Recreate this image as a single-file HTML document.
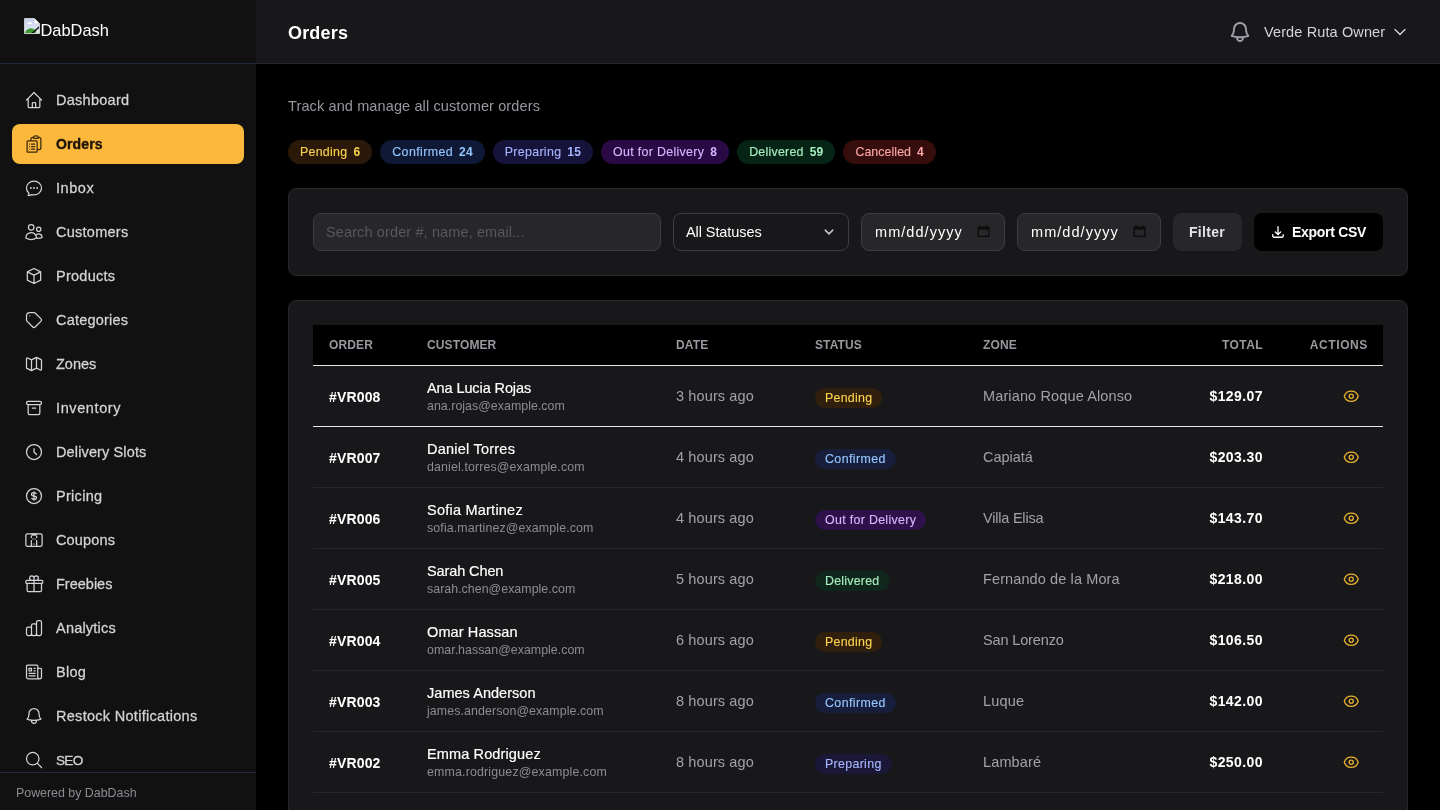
<!DOCTYPE html>
<html lang="en">
<head>
<meta charset="utf-8">
<title>Orders - DabDash</title>
<style>
*{box-sizing:border-box}
html,body{margin:0;padding:0}
html{will-change:transform}
body{width:1440px;height:810px;overflow:hidden;background:#000;color:#fff;font-family:"Liberation Sans",sans-serif;font-size:14px;position:relative}
svg{display:block}
.ico{fill:none;stroke:currentColor;stroke-width:1.5;stroke-linecap:round;stroke-linejoin:round}
/* sidebar */
aside{position:absolute;left:0;top:0;width:256px;height:810px;background:#111111;overflow:hidden}
.brand{height:64px;border-bottom:1px solid #1f2937;position:relative}
.brand svg{position:absolute;left:24px;top:18px}
.brand span{position:absolute;left:40.5px;top:19px;font-size:16px;line-height:22px;color:#fff}
nav{position:absolute;left:0;top:64px;width:256px;padding:16px 12px}
nav a{display:flex;align-items:center;height:40px;margin-bottom:4px;padding:0 12px;border-radius:8px;color:#d4d4d8;text-decoration:none;font-size:14px;font-weight:500}
nav a svg{width:20px;height:20px;margin-right:12px;flex:none}
nav a.on{background:#fcb73d;color:#1c1406;font-weight:600}
nav a.on svg{color:#3a2a0c}
.foot{position:absolute;left:0;top:772px;width:256px;height:38px;background:#111111;border-top:1px solid #1f2937;padding:12px 16px 0;font-size:12px;line-height:16px;color:#8a8a93}
/* header */
header{position:absolute;left:256px;top:0;width:1184px;height:64px;background:#18181b;border-bottom:1px solid #27272a}
header h1{position:absolute;left:32px;top:19px;margin:0;font-size:18px;line-height:28px;font-weight:600;color:#fff}
.bell{position:absolute;left:972px;top:20px;width:24px;height:24px;color:#a1a1ad;stroke-width:1.9}
.user{position:absolute;left:1008px;top:22px;font-size:14px;line-height:20px;color:#d4d4d8}
.chev{position:absolute;left:1136px;top:24px;width:16px;height:16px;color:#d4d4d8;stroke-width:2}
/* main */
.sub{position:absolute;left:288px;top:96px;font-size:14px;line-height:20px;color:#97979f}
.pills{position:absolute;left:288px;top:140px;display:flex}
.pill{height:24px;border-radius:12px;padding:4px 12px;font-size:12px;line-height:16px;margin-right:8px;white-space:nowrap;font-weight:500}
.pill b{margin-left:6px;font-weight:600}
.card{position:absolute;left:288px;width:1120px;background:#18181b;border:1px solid #27272a;border-radius:8px}
.filters{top:188px;height:88px}
.fld{position:absolute;top:24px;height:38px;border:1px solid #3c3c42;border-radius:8px;background:#27272a;font-size:14px;line-height:20px;padding:8px 12px;color:#fff;white-space:nowrap}
.btn{position:absolute;top:24px;height:38px;border-radius:8px;font-size:14px;line-height:20px;font-weight:600;padding:9px 16px;white-space:nowrap}
.tablecard{top:300px;height:600px}
table{position:absolute;left:24px;top:24px;width:1070px;border-collapse:collapse;table-layout:fixed}
th{background:#000;height:40px;padding:0 16px;text-align:left;font-size:12px;line-height:16px;font-weight:600;letter-spacing:.05em;color:#98989f;text-transform:uppercase;border-bottom:1px solid #e5e7eb}
td{height:61px;padding:0 16px;border-bottom:1px solid #27272a;font-size:14px;line-height:20px;color:#a1a1aa;vertical-align:middle;white-space:nowrap}
tr.first td{border-bottom:1px solid #e5e7eb}
td.id,td.tot{color:#fff;font-weight:600}
.r{text-align:right}
.nm{color:#fff;line-height:20px;display:block;font-weight:500}
.em{font-size:12px;line-height:16px;color:#8b8b94;display:block}
.badge{display:inline-block;height:20px;border-radius:10px;padding:2px 10px;font-size:12px;line-height:16px;position:relative;top:2px;font-weight:500}
.eye{display:inline-block;width:16.5px;height:16.5px;color:#e8b12c;vertical-align:middle;margin-right:7.75px;stroke-width:1.9;position:relative;top:0}
.pending{background:#2a1908;color:#fcd34d}
.confirmed{background:#0f1936;color:#93c5fd}
.preparing{background:#16133a;color:#a5b4fc}
.out{background:#290a44;color:#d8b4fe}
.delivered{background:#062416;color:#a6edbf}
.cancelled{background:#340d0c;color:#fca5a5}
.badge.pending{background:#2f1f0c}.badge.confirmed{background:#161e3c}.badge.preparing{background:#1b1837}.badge.out{background:#2d1148}.badge.delivered{background:#0e261b}.badge.cancelled{background:#381413}

/* metric tuning: Liberation Sans sized/spaced to the reference text extents */
.brand span{font-size:16.4px}
nav a span{font-size:14.5px;letter-spacing:.28px;-webkit-text-stroke:.26px currentColor}
nav a.on span{font-size:14px;letter-spacing:.14px;-webkit-text-stroke:.4px currentColor}
.foot{font-size:12.4px}
.user,.sub,.fld,td{font-size:14.5px;letter-spacing:.12px}
.em{font-size:12.4px;letter-spacing:.09px}
.pill,.badge{font-size:12.4px;letter-spacing:.28px;-webkit-text-stroke:.14px currentColor}
.pending{letter-spacing:0.27px}.confirmed{letter-spacing:0.4px}.preparing{letter-spacing:0.32px}.out{letter-spacing:0.32px}.delivered{letter-spacing:0.24px}.cancelled{letter-spacing:0.06px}
.pill b{font-size:12px;letter-spacing:.19px;-webkit-text-stroke:0}
.nm{font-size:14.5px;letter-spacing:.1px;-webkit-text-stroke:.18px currentColor}
td.id,td.tot,.btn{font-size:14px}
td.id{letter-spacing:.16px;padding-top:2px}
td.tot{letter-spacing:.42px;padding-right:15px}
th{font-size:12px;letter-spacing:.12px}
header h1{letter-spacing:.18px}
.date{letter-spacing:1.05px;padding-left:13px}
.btn.exp{letter-spacing:-.3px}
</style>
</head>
<body>
<aside>
  <div class="brand">
    <svg width="16.500" height="16.500" viewBox="0 0 17 17"><defs><linearGradient id="sky" x1="0" y1="0" x2="0" y2="1"><stop offset="0" stop-color="#c3cdeb"/><stop offset="1" stop-color="#e9eefa"/></linearGradient><clipPath id="pg"><path d="M.5.500h10l5.500 5.500v10h-15.500z"/></clipPath></defs><path d="M.5.500h10l5.500 5.500v10h-15.500z" fill="url(#sky)"/><g clip-path="url(#pg)"><circle cx="7.200" cy="17" r="6.400" fill="#3d9a2e"/><path d="M9.500 17l7-6.500v6.500z" fill="#e4eee6" opacity=".75"/><path d="M7.300 16.800l9.500-8.600" stroke="#111" stroke-width="1.500"/></g><path d="M.5.500h10l5.500 5.500v10h-15.500z" fill="none" stroke="#d9d9de" stroke-width=".9"/><path d="M10.500.500v5.500h5.500z" fill="#fff" stroke="#cfcfd6" stroke-width=".7"/><path d="M3.200 6.200c-.3-1 .6-1.600 1.300-1.300.3-1.300 2.300-1.300 2.700 0 .9-.2 1.500.6 1.200 1.300z" fill="#fff"/></svg>
    <span>DabDash</span>
  </div>
  <nav id="nav">
    <a><svg class="ico" viewBox="0 0 24 24"><path d="M3 12l2-2m0 0l7-7 7 7M5 10v10a1 1 0 001 1h3m10-11l2 2m-2-2v10a1 1 0 01-1 1h-3m-6 0a1 1 0 001-1v-4a1 1 0 011-1h2a1 1 0 011 1v4a1 1 0 001 1m-6 0h6"/></svg><span style="letter-spacing:0.27px">Dashboard</span></a>
    <a class="on"><svg class="ico" viewBox="0 0 24 24"><path d="M9 12h3.750M9 15h3.750M9 18h3.750m3 .750H18a2.250 2.250 0 002.250-2.250V6.108c0-1.135-.845-2.098-1.976-2.192a48.424 48.424 0 00-1.123-.080m-5.801 0c-.065.210-.1.433-.1.664 0 .414.336.750.750.750h4.500a.750.750 0 00.750-.750 2.250 2.250 0 00-.1-.664m-5.800 0A2.251 2.251 0 0113.500 2.250H15c1.012 0 1.867.668 2.150 1.586m-5.800 0c-.376.023-.750.050-1.124.080C9.095 4.010 8.250 4.973 8.250 6.108V8.250m0 0H4.875c-.621 0-1.125.504-1.125 1.125v11.250c0 .621.504 1.125 1.125 1.125h9.750c.621 0 1.125-.504 1.125-1.125V9.375c0-.621-.504-1.125-1.125-1.125H8.250zM6.750 12h.008v.008H6.750V12zm0 3h.008v.008H6.750V15zm0 3h.008v.008H6.750V18z"/></svg><span style="letter-spacing:0.14px">Orders</span></a>
    <a><svg class="ico" viewBox="0 0 24 24"><path d="M8.625 12a.375.375 0 11-.75 0 .375.375 0 01.75 0zm0 0H8.25m4.125 0a.375.375 0 11-.75 0 .375.375 0 01.75 0zm0 0H12m4.125 0a.375.375 0 11-.75 0 .375.375 0 01.75 0zm0 0h-.375M21 12c0 4.556-4.03 8.25-9 8.25a9.764 9.764 0 01-2.555-.337A5.972 5.972 0 015.41 20.97a5.969 5.969 0 01-.474-.065 4.48 4.48 0 00.978-2.025c.09-.457-.133-.901-.467-1.226C3.93 16.178 3 14.189 3 12c0-4.556 4.03-8.25 9-8.25s9 3.694 9 8.25z"/></svg><span style="letter-spacing:0.56px">Inbox</span></a>
    <a><svg class="ico" viewBox="0 0 24 24"><path d="M15 19.128a9.38 9.38 0 002.625.372 9.337 9.337 0 004.121-.952 4.125 4.125 0 00-7.533-2.493M15 19.128v-.003c0-1.113-.285-2.16-.786-3.07M15 19.128v.106A12.318 12.318 0 018.624 21c-2.331 0-4.512-.645-6.374-1.766l-.001-.109a6.375 6.375 0 0111.964-3.07M12 6.375a3.375 3.375 0 11-6.75 0 3.375 3.375 0 016.75 0zm8.25 2.25a2.625 2.625 0 11-5.25 0 2.625 2.625 0 015.25 0z"/></svg><span style="letter-spacing:0.26px">Customers</span></a>
    <a><svg class="ico" viewBox="0 0 24 24"><path d="M20 7l-8-4-8 4m16 0l-8 4m8-4v10l-8 4m0-10L4 7m8 4v10M4 7v10l8 4"/></svg><span style="letter-spacing:0.25px">Products</span></a>
    <a><svg class="ico" viewBox="0 0 24 24"><path d="M7 7h.010M7 3h5c.512 0 1.024.195 1.414.586l7 7a2 2 0 010 2.828l-7 7a2 2 0 01-2.828 0l-7-7A1.994 1.994 0 013 12V7a4 4 0 014-4z"/></svg><span style="letter-spacing:0.2px">Categories</span></a>
    <a><svg class="ico" viewBox="0 0 24 24"><path d="M9 20l-5.447-2.724A1 1 0 013 16.382V5.618a1 1 0 011.447-.894L9 7m0 13l6-3m-6 3V7m6 10l4.553 2.276A1 1 0 0021 18.382V7.618a1 1 0 00-.553-.894L15 4m0 13V4m0 0L9 7"/></svg><span style="letter-spacing:-0.02px">Zones</span></a>
    <a><svg class="ico" viewBox="0 0 24 24"><path d="M5 8h14M5 8a2 2 0 110-4h14a2 2 0 110 4M5 8v10a2 2 0 002 2h10a2 2 0 002-2V8m-9 4h4"/></svg><span style="letter-spacing:0.61px">Inventory</span></a>
    <a><svg class="ico" viewBox="0 0 24 24"><path d="M12 8v4l3 3m6-3a9 9 0 11-18 0 9 9 0 0118 0z"/></svg><span style="letter-spacing:0.13px">Delivery Slots</span></a>
    <a><svg class="ico" viewBox="0 0 24 24"><path d="M12 8c-1.657 0-3 .895-3 2s1.343 2 3 2 3 .895 3 2-1.343 2-3 2m0-8c1.110 0 2.080.402 2.599 1M12 8V7m0 1v8m0 0v1m0-1c-1.110 0-2.080-.402-2.599-1M21 12a9 9 0 11-18 0 9 9 0 0118 0z"/></svg><span style="letter-spacing:0.29px">Pricing</span></a>
    <a><svg class="ico" viewBox="0 0 24 24"><rect x="2.250" y="4.500" width="19.500" height="15" rx="1.700"/><path d="M8.800 5.500h6.400" stroke-width="2.600" stroke-linecap="butt"/><path d="M8.800 7.400v1.600M15.200 7.400v1.600M8.800 12.600v6.900M15.200 12.600v6.900"/><path d="M10.400 10.800h.010M12 10.800h.010M13.600 10.800h.010" stroke-width="1.300"/><path d="M10.800 16.900h2.400" stroke-width="1.100" opacity=".7"/></svg><span style="letter-spacing:0.14px">Coupons</span></a>
    <a><svg class="ico" viewBox="0 0 24 24"><path d="M21 11.25v8.25a1.5 1.5 0 01-1.5 1.5H5.250a1.5 1.5 0 01-1.5-1.5v-8.25M12 4.875A2.625 2.625 0 109.375 7.5H12m0-2.625V7.5m0-2.625A2.625 2.625 0 1114.625 7.5H12m0 0V21m-8.625-9.750h18c.621 0 1.125-.504 1.125-1.125v-1.500c0-.621-.504-1.125-1.125-1.125h-18c-.621 0-1.125.504-1.125 1.125v1.500c0 .621.504 1.125 1.125 1.125z"/></svg><span style="letter-spacing:-0.0px">Freebies</span></a>
    <a><svg class="ico" viewBox="0 0 24 24"><path d="M9 19v-6a2 2 0 00-2-2H5a2 2 0 00-2 2v6a2 2 0 002 2h2a2 2 0 002-2zm0 0V9a2 2 0 012-2h2a2 2 0 012 2v10m-6 0a2 2 0 002 2h2a2 2 0 002-2m0 0V5a2 2 0 012-2h2a2 2 0 012 2v14a2 2 0 01-2 2h-2a2 2 0 01-2-2z"/></svg><span style="letter-spacing:0.21px">Analytics</span></a>
    <a><svg class="ico" viewBox="0 0 24 24"><path d="M12 7.500h1.500m-1.500 3h1.500m-7.500 3h7.500m-7.500 3h7.500m3-9h3.375c.621 0 1.125.504 1.125 1.125V18a2.250 2.250 0 01-2.250 2.250M16.500 7.500V18a2.250 2.250 0 002.250 2.250M16.500 7.500V4.875c0-.621-.504-1.125-1.125-1.125H4.125C3.504 3.750 3 4.254 3 4.875V18a2.250 2.250 0 002.250 2.250h13.500M6 7.500h3v3H6v-3z"/></svg><span style="letter-spacing:0.28px">Blog</span></a>
    <a><svg class="ico" viewBox="0 0 24 24"><path d="M14.857 17.082a23.848 23.848 0 005.454-1.310A8.967 8.967 0 0118 9.750v-.7V9A6 6 0 006 9v.750a8.967 8.967 0 01-2.312 6.022c1.733.640 3.560 1.085 5.455 1.310m5.714 0a24.255 24.255 0 01-5.714 0m5.714 0a3 3 0 11-5.714 0"/></svg><span style="letter-spacing:0.29px">Restock Notifications</span></a>
    <a><svg class="ico" viewBox="0 0 24 24"><path d="M21 21l-5.197-5.197m0 0A7.500 7.500 0 105.196 5.196a7.500 7.500 0 0010.607 10.607z"/></svg><span style="font-size:13.6px;letter-spacing:-0.74px">SEO</span></a>
  </nav>
  <div class="foot">Powered by DabDash</div>
</aside>
<header>
  <h1>Orders</h1>
  <svg class="bell ico" viewBox="0 0 24 24"><path d="M14.857 17.082a23.848 23.848 0 005.454-1.31A8.967 8.967 0 0118 9.75v-.7V9A6 6 0 006 9v.75a8.967 8.967 0 01-2.312 6.022c1.733.64 3.56 1.085 5.455 1.31m5.714 0a24.255 24.255 0 01-5.714 0m5.714 0a3 3 0 11-5.714 0"/></svg>
  <div class="user">Verde Ruta Owner</div>
  <svg class="chev ico" viewBox="0 0 24 24"><path d="M19.5 8.25l-7.5 7.5-7.5-7.5"/></svg>
</header>
<div class="sub">Track and manage all customer orders</div>
<div class="pills">
  <div class="pill pending">Pending<b>6</b></div>
  <div class="pill confirmed">Confirmed<b>24</b></div>
  <div class="pill preparing">Preparing<b>15</b></div>
  <div class="pill out">Out for Delivery<b>8</b></div>
  <div class="pill delivered">Delivered<b>59</b></div>
  <div class="pill cancelled">Cancelled<b>4</b></div>
</div>
<div class="card filters" id="filters">
  <div class="fld" style="left:24px;width:348px;color:#57575d">Search order #, name, email...</div>
  <div class="fld" style="left:384px;width:176px;background:#18181b;letter-spacing:-.08px">All Statuses<svg class="ico" viewBox="0 0 24 24" style="position:absolute;right:13px;top:12px;width:12px;height:12px;stroke-width:3;color:#c4c4c9"><path d="M19.5 8.25l-7.5 7.5-7.5-7.5"/></svg></div>
  <div class="fld date" style="left:572px;width:144px">mm/dd/yyyy<svg viewBox="0 0 16 16" style="position:absolute;right:14px;top:10px;width:13px;height:14px"><path d="M1.5 3.5h13v11h-13z" fill="none" stroke="#0b0b0c" stroke-width="1.6"/><path d="M1.5 3h13v3.2h-13z" fill="#0b0b0c"/><path d="M4 1v2.5M12 1v2.5" stroke="#0b0b0c" stroke-width="1.6"/></svg></div>
  <div class="fld date" style="left:728px;width:144px">mm/dd/yyyy<svg viewBox="0 0 16 16" style="position:absolute;right:14px;top:10px;width:13px;height:14px"><path d="M1.5 3.5h13v11h-13z" fill="none" stroke="#0b0b0c" stroke-width="1.6"/><path d="M1.5 3h13v3.2h-13z" fill="#0b0b0c"/><path d="M4 1v2.5M12 1v2.5" stroke="#0b0b0c" stroke-width="1.6"/></svg></div>
  <div class="btn" style="left:884px;width:69px;background:#27272a;color:#e4e4e7;letter-spacing:.3px">Filter</div>
  <div class="btn exp" style="left:965px;width:129px;background:#000;color:#fff;padding-left:38px"><svg class="ico" viewBox="0 0 24 24" style="position:absolute;left:17px;top:12px;width:14px;height:14px;stroke-width:2.3"><path d="M3 16.5v2.25A2.25 2.25 0 005.25 21h13.5A2.25 2.25 0 0021 18.75V16.500M16.500 12L12 16.500m0 0L7.500 12m4.500 4.500V3"/></svg>Export CSV</div>
</div>
<div class="card tablecard" id="tablecard">
  <table>
    <colgroup><col style="width:98px"><col style="width:249px"><col style="width:139px"><col style="width:168px"><col style="width:211px"><col style="width:100px"><col style="width:105px"></colgroup>
    <thead><tr><th>Order</th><th>Customer</th><th>Date</th><th>Status</th><th>Zone</th><th class="r" style="letter-spacing:.42px;padding-right:15px">Total</th><th class="r" style="letter-spacing:.62px;padding-right:15px">Actions</th></tr></thead>
    <tbody>
      <tr class="first"><td class="id">#VR008</td><td><span class="nm" style="letter-spacing:-0.1px">Ana Lucia Rojas</span><span class="em" style="letter-spacing:0.03px">ana.rojas@example.com</span></td><td>3 hours ago</td><td><span class="badge pending">Pending</span></td><td class="z" style="letter-spacing:0.13px">Mariano Roque Alonso</td><td class="tot r">$129.07</td><td class="r"><svg class="eye ico" viewBox="0 0 24 24"><path d="M2.036 12.322a1.012 1.012 0 010-.639C3.423 7.510 7.360 4.500 12 4.500c4.638 0 8.573 3.007 9.963 7.178.07.207.07.431 0 .639C20.577 16.490 16.640 19.500 12 19.500c-4.638 0-8.573-3.007-9.963-7.178z"/><path d="M15 12a3 3 0 11-6 0 3 3 0 016 0z"/></svg></td></tr>
      <tr><td class="id">#VR007</td><td><span class="nm" style="letter-spacing:0.23px">Daniel Torres</span><span class="em" style="letter-spacing:0.13px">daniel.torres@example.com</span></td><td>4 hours ago</td><td><span class="badge confirmed">Confirmed</span></td><td class="z" style="letter-spacing:-0.04px">Capiatá</td><td class="tot r">$203.30</td><td class="r"><svg class="eye ico" viewBox="0 0 24 24"><path d="M2.036 12.322a1.012 1.012 0 010-.639C3.423 7.510 7.360 4.500 12 4.500c4.638 0 8.573 3.007 9.963 7.178.07.207.07.431 0 .639C20.577 16.490 16.640 19.500 12 19.500c-4.638 0-8.573-3.007-9.963-7.178z"/><path d="M15 12a3 3 0 11-6 0 3 3 0 016 0z"/></svg></td></tr>
      <tr><td class="id">#VR006</td><td><span class="nm" style="letter-spacing:0.23px">Sofia Martinez</span><span class="em" style="letter-spacing:0.12px">sofia.martinez@example.com</span></td><td>4 hours ago</td><td><span class="badge out">Out for Delivery</span></td><td class="z" style="letter-spacing:-0.21px">Villa Elisa</td><td class="tot r">$143.70</td><td class="r"><svg class="eye ico" viewBox="0 0 24 24"><path d="M2.036 12.322a1.012 1.012 0 010-.639C3.423 7.510 7.360 4.500 12 4.500c4.638 0 8.573 3.007 9.963 7.178.07.207.07.431 0 .639C20.577 16.490 16.640 19.500 12 19.500c-4.638 0-8.573-3.007-9.963-7.178z"/><path d="M15 12a3 3 0 11-6 0 3 3 0 016 0z"/></svg></td></tr>
      <tr><td class="id">#VR005</td><td><span class="nm" style="letter-spacing:-0.11px">Sarah Chen</span><span class="em" style="letter-spacing:0.03px">sarah.chen@example.com</span></td><td>5 hours ago</td><td><span class="badge delivered">Delivered</span></td><td class="z" style="letter-spacing:0.11px">Fernando de la Mora</td><td class="tot r">$218.00</td><td class="r"><svg class="eye ico" viewBox="0 0 24 24"><path d="M2.036 12.322a1.012 1.012 0 010-.639C3.423 7.510 7.360 4.500 12 4.500c4.638 0 8.573 3.007 9.963 7.178.07.207.07.431 0 .639C20.577 16.490 16.640 19.500 12 19.500c-4.638 0-8.573-3.007-9.963-7.178z"/><path d="M15 12a3 3 0 11-6 0 3 3 0 016 0z"/></svg></td></tr>
      <tr><td class="id">#VR004</td><td><span class="nm" style="letter-spacing:0.11px">Omar Hassan</span><span class="em" style="letter-spacing:0.02px">omar.hassan@example.com</span></td><td>6 hours ago</td><td><span class="badge pending">Pending</span></td><td class="z" style="letter-spacing:-0.14px">San Lorenzo</td><td class="tot r">$106.50</td><td class="r"><svg class="eye ico" viewBox="0 0 24 24"><path d="M2.036 12.322a1.012 1.012 0 010-.639C3.423 7.510 7.360 4.500 12 4.500c4.638 0 8.573 3.007 9.963 7.178.07.207.07.431 0 .639C20.577 16.490 16.640 19.500 12 19.500c-4.638 0-8.573-3.007-9.963-7.178z"/><path d="M15 12a3 3 0 11-6 0 3 3 0 016 0z"/></svg></td></tr>
      <tr><td class="id">#VR003</td><td><span class="nm" style="letter-spacing:0.04px">James Anderson</span><span class="em" style="letter-spacing:0.09px">james.anderson@example.com</span></td><td>8 hours ago</td><td><span class="badge confirmed">Confirmed</span></td><td class="z" style="letter-spacing:0.17px">Luque</td><td class="tot r">$142.00</td><td class="r"><svg class="eye ico" viewBox="0 0 24 24"><path d="M2.036 12.322a1.012 1.012 0 010-.639C3.423 7.510 7.360 4.500 12 4.500c4.638 0 8.573 3.007 9.963 7.178.07.207.07.431 0 .639C20.577 16.490 16.640 19.500 12 19.500c-4.638 0-8.573-3.007-9.963-7.178z"/><path d="M15 12a3 3 0 11-6 0 3 3 0 016 0z"/></svg></td></tr>
      <tr><td class="id">#VR002</td><td><span class="nm" style="letter-spacing:0.13px">Emma Rodriguez</span><span class="em" style="letter-spacing:0.16px">emma.rodriguez@example.com</span></td><td>8 hours ago</td><td><span class="badge preparing">Preparing</span></td><td class="z" style="letter-spacing:0.13px">Lambaré</td><td class="tot r">$250.00</td><td class="r"><svg class="eye ico" viewBox="0 0 24 24"><path d="M2.036 12.322a1.012 1.012 0 010-.639C3.423 7.510 7.360 4.500 12 4.500c4.638 0 8.573 3.007 9.963 7.178.07.207.07.431 0 .639C20.577 16.490 16.640 19.500 12 19.500c-4.638 0-8.573-3.007-9.963-7.178z"/><path d="M15 12a3 3 0 11-6 0 3 3 0 016 0z"/></svg></td></tr>
      <tr><td class="id">#VR001</td><td><span class="nm" style="letter-spacing:0.29px;position:relative;top:1px">Michael Brown</span><span class="em" style="letter-spacing:0.14px">michael.brown@example.com</span></td><td>9 hours ago</td><td><span class="badge delivered">Delivered</span></td><td class="z" style="letter-spacing:0.09px">Asunción</td><td class="tot r">$187.40</td><td class="r"><svg class="eye ico" viewBox="0 0 24 24"><path d="M2.036 12.322a1.012 1.012 0 010-.639C3.423 7.510 7.360 4.500 12 4.500c4.638 0 8.573 3.007 9.963 7.178.07.207.07.431 0 .639C20.577 16.490 16.640 19.500 12 19.500c-4.638 0-8.573-3.007-9.963-7.178z"/><path d="M15 12a3 3 0 11-6 0 3 3 0 016 0z"/></svg></td></tr>
    </tbody>
  </table>
</div>
</body>
</html>
